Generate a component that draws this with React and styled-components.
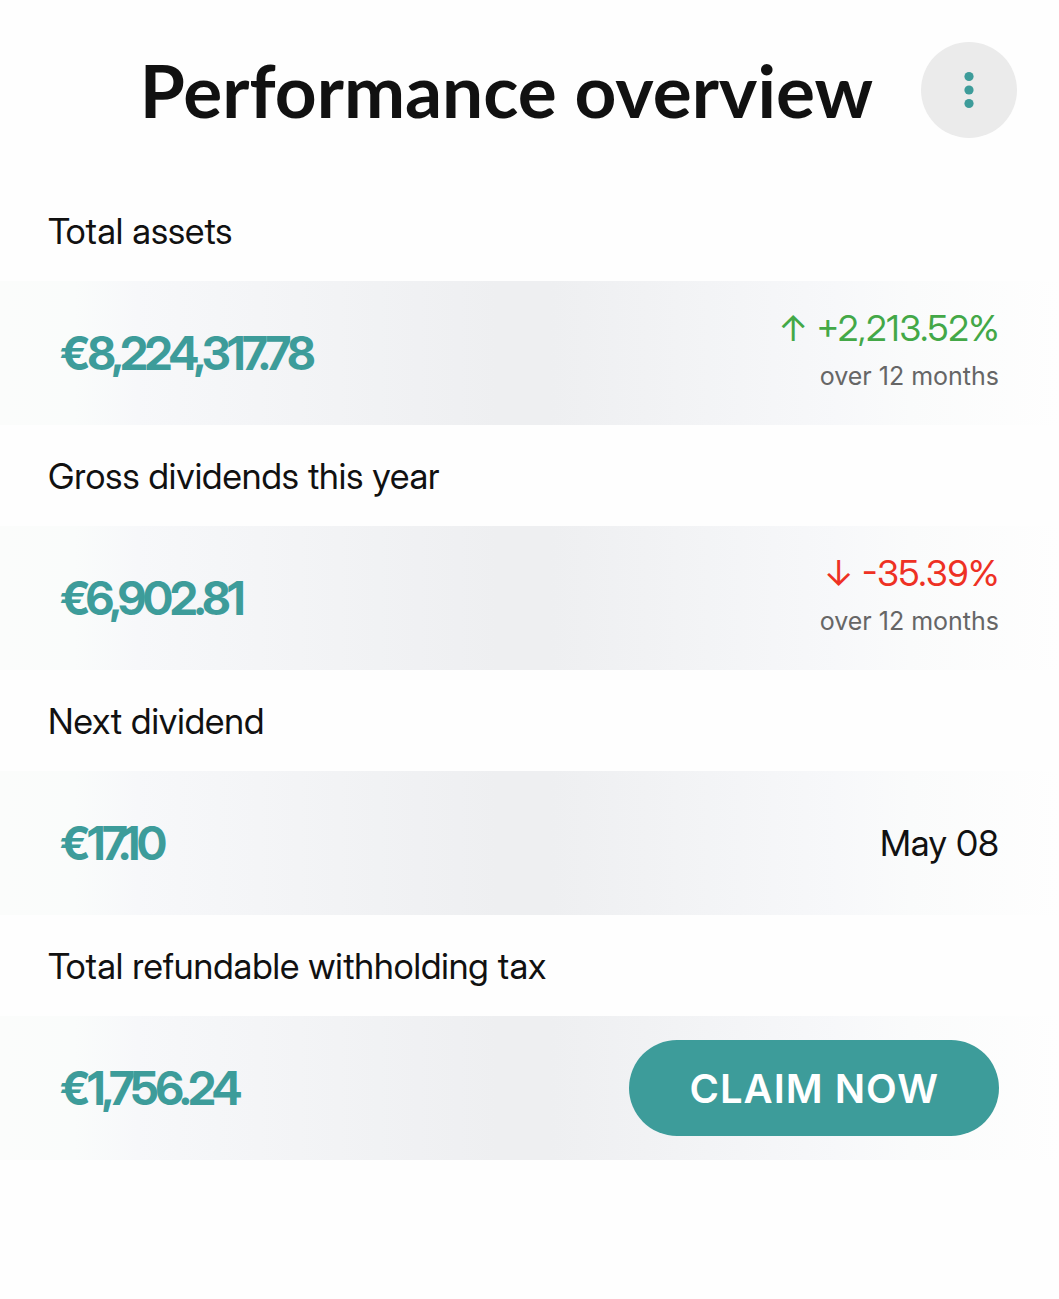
import React from 'react';
import styled, { createGlobalStyle } from 'styled-components';

const textFont = 'Inter, "Liberation Sans", sans-serif';
const displayFont = `"Inter Display", ${textFont}`;

const GlobalStyle = createGlobalStyle`
  * {
    box-sizing: border-box;
  }

  body {
    margin: 0;
    background: #fefefe;
    color: #111111;
    font-family: ${displayFont};
  }
`;

const Header = styled.header`
  display: flex;
  align-items: center;
  justify-content: flex-end;
  gap: 48px;
  height: 180px;
  padding: 0 42px;
`;

const Title = styled.h1`
  margin: 0;
  font-family: Lato, "Open Sans", sans-serif;
  font-size: 73px;
  font-weight: 700;
  line-height: 96px;
  white-space: nowrap;
`;

const MenuButton = styled.button`
  display: flex;
  flex: none;
  align-items: center;
  justify-content: center;
  width: 96px;
  height: 96px;
  padding: 0;
  border: 0;
  border-radius: 50%;
  background: #ebebeb;
  color: #3d9c9a;
  cursor: pointer;
`;

const Label = styled.h2`
  margin: 0;
  padding: 27px 48px 26px;
  font-size: 36px;
  font-weight: 400;
  line-height: 48px;
`;

const Row = styled.div`
  display: flex;
  align-items: center;
  justify-content: space-between;
  height: 144px;
  padding: 0 60px;
  background: linear-gradient(90deg, #fbfcfb 0%, #fafcfb 7%, #f7f8fa 13%, #eeeff1 47%, #eeeff1 52%, #f7f8fa 79%, #fafbfb 86%, #fefefe 100%);
`;

const Amount = styled.strong`
  color: #3d9c9a;
  font-size: 46px;
  font-weight: 700;
  letter-spacing: -3px;
  line-height: 48px;
`;

const Details = styled.div`
  padding-bottom: 2px;
  text-align: right;
`;

const Value = styled.div`
  color: ${({ $trend }) => ({ up: '#43a847', down: '#ee3124' }[$trend] || 'inherit')};
  font-size: 36px;
  line-height: 48px;
`;

const Period = styled.div`
  color: #666666;
  font-family: ${textFont};
  font-size: 25px;
  line-height: 48px;
`;

const ClaimButton = styled.button`
  height: 96px;
  padding: 0 60px;
  border: 0;
  border-radius: 48px;
  background: #3d9c9a;
  color: #ffffff;
  font-family: ${textFont};
  font-size: 40px;
  font-weight: 600;
  letter-spacing: 1px;
  cursor: pointer;
`;

const items = [
  { label: 'Total assets', amount: '€8,224,317.78', trend: 'up', change: '+2,213.52%' },
  { label: 'Gross dividends this year', amount: '€6,902.81', trend: 'down', change: '-35.39%' },
  { label: 'Next dividend', amount: '€17.10', date: 'May 08' },
  { label: 'Total refundable withholding tax', amount: '€1,756.24', claimable: true }
];

function Item({ item }) {
  return (
    <section>
      <Label>{item.label}</Label>
      <Row>
        <Amount>{item.amount}</Amount>
        {item.trend && (
          <Details>
            <Value $trend={item.trend}>
              {item.trend === 'up' ? '↑' : '↓'} {item.change}
            </Value>
            <Period>over 12 months</Period>
          </Details>
        )}
        {item.date && <Value>{item.date}</Value>}
        {item.claimable && <ClaimButton type="button">CLAIM NOW</ClaimButton>}
      </Row>
    </section>
  );
}

export default function App() {
  return (
    <main>
      <GlobalStyle />
      <Header>
        <Title>Performance overview</Title>
        <MenuButton type="button" aria-label="More options">
          <svg width="10" height="38" viewBox="0 0 10 38" fill="currentColor" aria-hidden="true">
            <circle cx="5" cy="5.5" r="4.6" />
            <circle cx="5" cy="19" r="4.6" />
            <circle cx="5" cy="32.5" r="4.6" />
          </svg>
        </MenuButton>
      </Header>
      {items.map(item => <Item key={item.label} item={item} />)}
    </main>
  );
}
